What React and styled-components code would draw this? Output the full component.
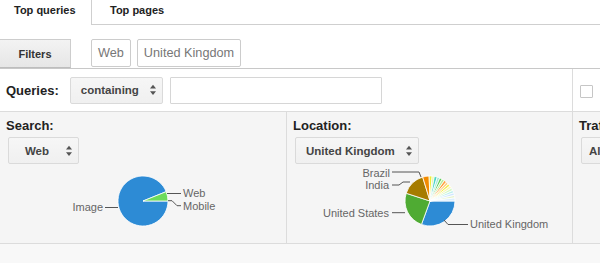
import styled, { createGlobalStyle } from "styled-components";

const GlobalStyle = createGlobalStyle`
    html, body {
        margin: 0;
        padding: 0;
        background: #ffffff;
        overflow: hidden;
    }
    body {
        font-family: "Liberation Sans", Arial, sans-serif;
        color: #222;
    }
`;

const searchSlices = [
    { from: 0, to: 338, color: "#2d8bd5" },
    { from: 338, to: 360, color: "#6ddb5b" },
];

const locationSlices = [
    { from: 0, to: 110, color: "#2d8bd5" },
    { from: 110, to: 198, color: "#4fab33" },
    { from: 198, to: 253, color: "#a67c00" },
    { from: 253, to: 268, color: "#f28a00" },
    { from: 268, to: 275, color: "#eeec3a" },
    { from: 275, to: 280, color: "#e4f39a" },
    { from: 280, to: 287, color: "#4dd5c4" },
    { from: 287, to: 293, color: "#9fe7da" },
    { from: 293, to: 299, color: "#5fcd5a" },
    { from: 299, to: 305, color: "#b6ee9c" },
    { from: 305, to: 311, color: "#ffa23c" },
    { from: 311, to: 317, color: "#ffd08e" },
    { from: 317, to: 323, color: "#f6ee5a" },
    { from: 323, to: 329, color: "#fbf7b0" },
    { from: 329, to: 335, color: "#d6f7c6" },
    { from: 335, to: 341, color: "#bff0ee" },
    { from: 341, to: 347, color: "#cfe6ff" },
    { from: 347, to: 353, color: "#e6f3d0" },
    { from: 353, to: 360, color: "#dcefff" },
];

const slicePath = (cx, cy, r, a0, a1) => {
    const rad = (d) => (d * Math.PI) / 180;
    const x0 = cx + r * Math.cos(rad(a0));
    const y0 = cy + r * Math.sin(rad(a0));
    const x1 = cx + r * Math.cos(rad(a1));
    const y1 = cy + r * Math.sin(rad(a1));
    const large = a1 - a0 > 180 ? 1 : 0;
    return `M${cx} ${cy} L${x0.toFixed(2)} ${y0.toFixed(2)} A${r} ${r} 0 ${large} 1 ${x1.toFixed(2)} ${y1.toFixed(2)} Z`;
};

const Pie = ({ slices }) => (
    <g stroke="#ffffff" strokeWidth="0.8" strokeLinejoin="round">
        {slices.map((s, i) => (
            <path key={i} d={slicePath(143, 33, 25, s.from, s.to)} fill={s.color} />
        ))}
    </g>
);

const Arrows = () => (
    <ArrowIcon width="6" height="12" viewBox="0 0 6 12">
        <path d="M0 4.6 L3 0.8 L6 4.6 Z" fill="#555" />
        <path d="M0 7.2 L3 11 L6 7.2 Z" fill="#555" />
    </ArrowIcon>
);

const Select = ({ children, compact }) => (
    <SelectBox $compact={compact}>
        <SelectText>{children}</SelectText>
        <Arrows />
    </SelectBox>
);

const SearchChart = () => (
    <Chart width="286" height="75" viewBox="0 0 286 75">
        <Pie slices={searchSlices} />
        <g fill="none" stroke="#555" strokeWidth="1">
            <path d="M167 25.5 H181" />
            <path d="M168 32.7 H172 L177 37.7 H181" />
            <path d="M105 39.5 H118" />
        </g>
        <ChartText x="183" y="29.3">Web</ChartText>
        <ChartText x="183" y="42">Mobile</ChartText>
        <ChartText x="103" y="43" textAnchor="end">Image</ChartText>
    </Chart>
);

const LocationChart = () => (
    <Chart width="286" height="75" viewBox="0 0 286 75">
        <Pie slices={locationSlices} />
        <g fill="none" stroke="#555" strokeWidth="1">
            <path d="M105 4 H132 L134 9" />
            <path d="M105 17 H112 L116 14 H123" />
            <path d="M105 44.7 H118" />
            <path d="M157 52 L161 56.5 H181" />
        </g>
        <ChartText x="103" y="8.5" textAnchor="end">Brazil</ChartText>
        <ChartText x="102" y="21" textAnchor="end">India</ChartText>
        <ChartText x="102" y="49" textAnchor="end">United States</ChartText>
        <ChartText x="183" y="60">United Kingdom</ChartText>
    </Chart>
);

const App = () => {
    return (
        <Page>
            <GlobalStyle />
            <TabBar>
                <Tab $active>Top queries</Tab>
                <Tab>Top pages</Tab>
                <TabFill />
            </TabBar>
            <FilterBar>
                <FilterButton>Filters</FilterButton>
                <Chips>
                    <Chip>Web</Chip>
                    <Chip>United Kingdom</Chip>
                </Chips>
            </FilterBar>
            <QueryRow>
                <QueryMain>
                    <RowLabel>Queries:</RowLabel>
                    <Select>containing</Select>
                    <TextInput />
                </QueryMain>
                <QuerySide>
                    <Checkbox />
                </QuerySide>
            </QueryRow>
            <Panels>
                <Panel>
                    <PanelHead>
                        <PanelLabel>Search:</PanelLabel>
                        <Select>Web</Select>
                    </PanelHead>
                    <SearchChart />
                </Panel>
                <Panel>
                    <PanelHead>
                        <PanelLabel>Location:</PanelLabel>
                        <Select>United Kingdom</Select>
                    </PanelHead>
                    <LocationChart />
                </Panel>
                <Panel $last>
                    <PanelHead>
                        <PanelLabel>Traffic:</PanelLabel>
                        <Select compact>All</Select>
                    </PanelHead>
                </Panel>
            </Panels>
            <Footer />
        </Page>
    );
};

export default App;

const Page = styled.div`
    width: 600px;
    height: 263px;
    display: flex;
    flex-direction: column;
    overflow: hidden;
`;

const TabBar = styled.div`
    display: flex;
    height: 25px;
    flex-shrink: 0;
`;

const Tab = styled.div`
    box-sizing: border-box;
    height: 25px;
    line-height: 21px;
    font-size: 11px;
    font-weight: bold;
    color: #222;
    white-space: nowrap;
    padding: 0 ${(p) => (p.$active ? "0 0 14px" : "20px 0 18px")};
    width: ${(p) => (p.$active ? "91px" : "auto")};
    border-left: ${(p) => (p.$active ? "none" : "1px solid #cfcfcf")};
    border-bottom: ${(p) => (p.$active ? "none" : "1px solid #cfcfcf")};
`;

const TabFill = styled.div`
    flex: 1;
    border-bottom: 1px solid #cfcfcf;
`;

const FilterBar = styled.div`
    display: flex;
    align-items: flex-end;
    height: 44px;
    box-sizing: border-box;
    padding-top: 14px;
    border-bottom: 1px solid #c8c8c8;
    flex-shrink: 0;
`;

const FilterButton = styled.div`
    box-sizing: border-box;
    width: 71px;
    height: 29px;
    line-height: 28px;
    text-align: center;
    font-size: 11px;
    font-weight: bold;
    color: #333;
    background: linear-gradient(#f3f3f3, #e6e6e6);
    border: 1px solid #cdcdcd;
    border-left: none;
    border-bottom: 1px solid #bdbdbd;
`;

const Chips = styled.div`
    display: flex;
    gap: 6px;
    margin: 0 0 1px 20px;
`;

const Chip = styled.div`
    box-sizing: border-box;
    height: 28px;
    line-height: 26px;
    padding: 0 6px;
    font-size: 12.7px;
    color: #777;
    background: #fff;
    border: 1px solid #cccccc;
    border-radius: 2px;
`;

const QueryRow = styled.div`
    display: flex;
    height: 43px;
    box-sizing: border-box;
    border-bottom: 1px solid #dcdcdc;
    flex-shrink: 0;
`;

const QueryMain = styled.div`
    width: 572px;
    display: flex;
    align-items: center;
    padding-left: 6px;
    box-sizing: border-box;
`;

const RowLabel = styled.div`
    font-size: 13px;
    font-weight: bold;
    color: #222;
    margin-right: 11px;
`;

const QuerySide = styled.div`
    flex: 1;
    display: flex;
    align-items: center;
    padding-left: 7px;
    border-left: 1px solid #dcdcdc;
`;

const Checkbox = styled.div`
    box-sizing: border-box;
    width: 13px;
    height: 13px;
    margin-top: 3px;
    background: #fff;
    border: 1px solid #c6c6c6;
    border-radius: 1px;
`;

const SelectBox = styled.div`
    box-sizing: border-box;
    display: inline-flex;
    align-items: center;
    height: 27px;
    min-width: ${(p) => (p.$compact ? "0" : "71px")};
    padding-left: ${(p) => (p.$compact ? "7px" : "10px")};
    background: linear-gradient(#f6f6f6, #f0f0f0);
    border: 1px solid #dadada;
    border-radius: 2px;
    white-space: nowrap;
`;

const SelectText = styled.span`
    flex: 1;
    text-align: center;
    font-size: 11.5px;
    font-weight: bold;
    color: #444;
`;

const ArrowIcon = styled.svg`
    display: block;
    flex-shrink: 0;
    margin: 0 6px 0 11px;
`;

const TextInput = styled.div`
    box-sizing: border-box;
    width: 212px;
    height: 27px;
    margin-left: 7px;
    background: #fff;
    border: 1px solid #d6d6d6;
    border-radius: 1px;
`;

const Panels = styled.div`
    display: grid;
    grid-template-columns: 287px 286px 1fr;
    background: #f5f5f5;
    border-bottom: 1px solid #dcdcdc;
    flex-shrink: 0;
`;

const Panel = styled.div`
    box-sizing: border-box;
    overflow: hidden;
    height: 131px;
    border-right: ${(p) => (p.$last ? "none" : "1px solid #dcdcdc")};
`;

const PanelHead = styled.div`
    padding: 6px 0 0 6px;
    white-space: nowrap;
    ${SelectBox} {
        margin: 3px 0 0 2px;
    }
`;

const PanelLabel = styled.div`
    font-size: 13px;
    line-height: 16px;
    font-weight: bold;
    color: #222;
`;

const Chart = styled.svg`
    display: block;
    margin-top: 4px;
    overflow: visible;
`;

const ChartText = styled.text`
    font-family: "Liberation Sans", Arial, sans-serif;
    font-size: 11px;
    fill: #666;
`;

const Footer = styled.div`
    flex: 1;
    background: #f8f8f8;
`;
